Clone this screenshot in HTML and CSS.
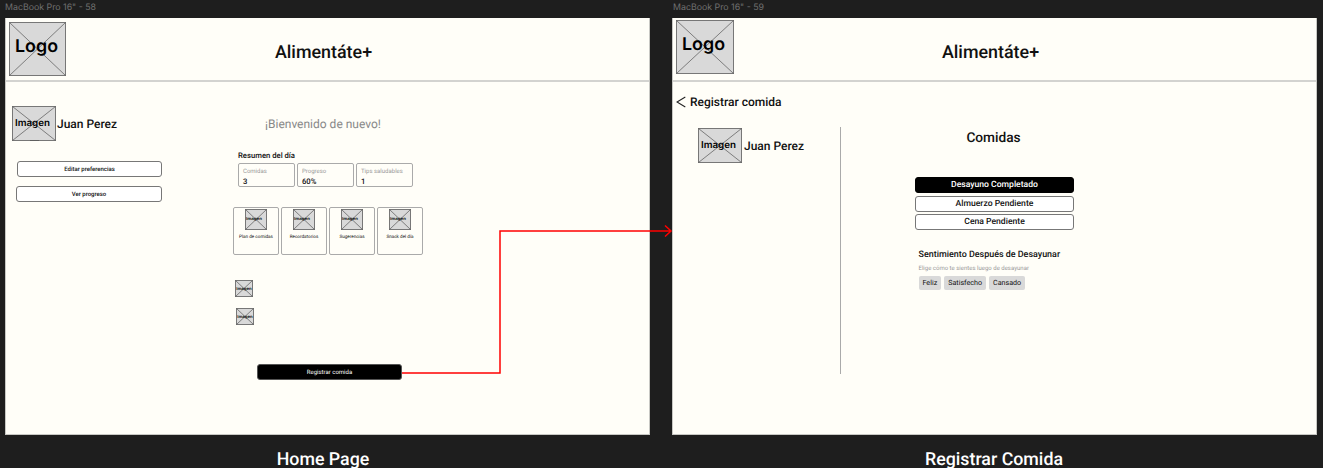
FILE: index.html
```html
<!DOCTYPE html>
<html lang="es">
<head>
<meta charset="utf-8">
<title>Alimentáte+ wireframes</title>
<link rel="stylesheet" href="styles.css">
</head>
<body>
<main class="canvas">
  <section class="artboard">
    <div class="frame-name">MacBook Pro 16" - 58</div>
    <div class="frame">
      <header class="header">
        <svg class="logo" viewBox="0 0 57 54"><rect x=".5" y=".5" width="56" height="53"/><path d="M.5.5l56 53M56.5.5l-56 53"/><text x="6" y="29.5" textLength="43" lengthAdjust="spacingAndGlyphs">Logo</text></svg>
        <h1>Alimentáte+</h1>
      </header>
      <div class="home">
        <aside class="sidebar">
          <div class="profile">
            <svg class="avatar" viewBox="0 0 44 35"><rect x=".5" y=".5" width="43" height="34"/><path d="M.5.5l43 34M43.5.5l-43 34M18 34.5h9"/><text x="3" y="20" textLength="35" lengthAdjust="spacingAndGlyphs">Imagen</text></svg>
            <span>Juan Perez</span>
          </div>
          <button class="side-button">Editar preferencias</button>
          <button class="side-button second">Ver progreso</button>
        </aside>
        <div class="content">
          <p class="welcome">¡Bienvenido de nuevo!</p>
          <h2 class="summary-title">Resumen del día</h2>
          <div class="stats">
            <div class="stat"><span>Comidas</span><b>3</b></div>
            <div class="stat"><span>Progreso</span><b>60%</b></div>
            <div class="stat"><span>Tips saludables</span><b>1</b></div>
          </div>
          <div class="cards">
            <div class="card"><svg viewBox="0 0 22 21"><rect x=".5" y=".5" width="21" height="20"/><path d="M.5.5l21 20M21.5.5l-21 20"/><text x="1" y="10.8" textLength="16" lengthAdjust="spacingAndGlyphs">Imagen</text></svg><span>Plan de comidas</span></div>
            <div class="card"><svg viewBox="0 0 22 21"><rect x=".5" y=".5" width="21" height="20"/><path d="M.5.5l21 20M21.5.5l-21 20"/><text x="1" y="10.8" textLength="16" lengthAdjust="spacingAndGlyphs">Imagen</text></svg><span>Recordatorios</span></div>
            <div class="card"><svg viewBox="0 0 22 21"><rect x=".5" y=".5" width="21" height="20"/><path d="M.5.5l21 20M21.5.5l-21 20"/><text x="1" y="10.8" textLength="16" lengthAdjust="spacingAndGlyphs">Imagen</text></svg><span>Sugerencias</span></div>
            <div class="card"><svg viewBox="0 0 22 21"><rect x=".5" y=".5" width="21" height="20"/><path d="M.5.5l21 20M21.5.5l-21 20"/><text x="1" y="10.8" textLength="16" lengthAdjust="spacingAndGlyphs">Imagen</text></svg><span>Snack del día</span></div>
          </div>
          <div class="thumbs">
            <svg viewBox="0 0 18 17"><rect x=".5" y=".5" width="17" height="16"/><path d="M.5.5l17 16M17.5.5l-17 16"/><text x="1.2" y="10" textLength="15.5" lengthAdjust="spacingAndGlyphs">Imagen</text></svg>
            <svg class="shifted" viewBox="0 0 18 17"><rect x=".5" y=".5" width="17" height="16"/><path d="M.5.5l17 16M17.5.5l-17 16"/><text x="1.2" y="10" textLength="15.5" lengthAdjust="spacingAndGlyphs">Imagen</text></svg>
          </div>
          <button class="register">Registrar comida</button>
        </div>
      </div>
    </div>
    <h3 class="caption">Home Page</h3>
  </section>

  <section class="artboard">
    <div class="frame-name second-name">MacBook Pro 16" - 59</div>
    <div class="frame">
      <header class="header meal-header">
        <svg class="logo" viewBox="0 0 58 54"><rect x=".5" y=".5" width="57" height="53"/><path d="M.5.5l57 53M57.5.5l-57 53"/><text x="6" y="29.5" textLength="43" lengthAdjust="spacingAndGlyphs">Logo</text></svg>
        <h1>Alimentáte+</h1>
      </header>
      <div class="back">
        <svg viewBox="0 0 10 12"><path d="M9.3 1L1 6l8.3 5"/></svg>
        <span>Registrar comida</span>
      </div>
      <div class="meal">
        <aside class="meal-side">
          <div class="profile">
            <svg class="avatar" viewBox="0 0 44 35"><rect x=".5" y=".5" width="43" height="34"/><path d="M.5.5l43 34M43.5.5l-43 34"/><text x="3" y="20" textLength="35" lengthAdjust="spacingAndGlyphs">Imagen</text></svg>
            <span>Juan Perez</span>
          </div>
        </aside>
        <div class="meal-content">
          <h2 class="meal-title">Comidas</h2>
          <div class="meal-list">
            <button class="meal-button done">Desayuno Completado</button>
            <button class="meal-button">Almuerzo Pendiente</button>
            <button class="meal-button">Cena Pendiente</button>
          </div>
          <h3 class="feeling-title">Sentimiento Después de Desayunar</h3>
          <p class="feeling-hint">Elige cómo te sientes luego de desayunar</p>
          <div class="chips"><span>Feliz</span><span>Satisfecho</span><span>Cansado</span></div>
        </div>
      </div>
    </div>
    <h3 class="caption meal-caption">Registrar Comida</h3>
  </section>

  <svg class="connector" viewBox="0 0 1323 468"><path d="M402 373H500V231H671M665 225.500L671 231L665 236.500"/></svg>
</main>
</body>
</html>
```
FILE: styles.css
```css
* { box-sizing: border-box; margin: 0; padding: 0; }
body { background: #1e1e1e; font-family: Roboto, sans-serif; color: #111; overflow: hidden; text-rendering: geometricPrecision; }
button { font: inherit; color: inherit; display: block; text-rendering: inherit; }
svg { display: block; flex: none; }
.canvas { position: relative; width: 1323px; height: 468px; padding-left: 5px; display: flex; gap: 22px; }
.connector { position: absolute; inset: 0; width: 1323px; height: 468px; fill: none; pointer-events: none; }
.artboard { width: 645px; flex: none; }
.frame-name { height: 18px; font: 8.8px/16px Inter, sans-serif; color: #707070; white-space: nowrap; }
.second-name { padding-left: 1px; }
.frame { height: 417px; background: #fffef8; border: solid #c8c8c4; border-width: 0 1px 1px; }
.caption { font-size: 17.8px; font-weight: 500; line-height: 22px; margin-top: 14px; padding-right: 9px; text-align: center; color: #fff; }
.meal-caption { padding-right: 1px; }

rect { fill: #d9d9d9; stroke: #777; stroke-width: 1; }
path { fill: none; stroke: #555; stroke-width: .7; }
.connector path { stroke: #f00; stroke-width: 1.5; }
text { font-family: Inter, sans-serif; font-weight: 600; fill: #000; }

.header { height: 64px; border-bottom: 2px solid #d3d3d0; padding: 4px 0 0 3px; display: flex; }
.meal-header { padding: 2px 0 0 3px; }
.logo { width: 57px; height: 54px; }
.meal-header .logo { width: 58px; }
.logo text { font-size: 17.5px; }
.header h1 { flex: 1; font-size: 17.9px; font-weight: 500; line-height: 22px; padding: 20px 68px 0 0; text-align: center; }
.header.meal-header h1 { padding: 22px 69px 0 0; }

.home { display: flex; }
.sidebar { width: 227px; padding: 24px 0 0 6px; }
.profile { display: flex; align-items: center; gap: 1px; height: 35px; font-size: 12px; font-weight: 500; }
.avatar { width: 44px; height: 35px; }
.avatar text { font-size: 9.5px; }
.side-button { width: 145px; height: 16px; margin: 20px 0 0 5px; padding-top: 1px; border: 1px solid #777; border-radius: 3px; background: #fff; font-size: 6px; font-weight: 500; line-height: 13px; }
.side-button.second { width: 146px; margin: 9px 0 0 4px; }

.content { width: 190px; padding-top: 35px; }
.welcome { font-size: 12px; line-height: 14px; text-align: center; color: #888; padding-right: 10px; white-space: nowrap; }
.summary-title { font-size: 7.7px; font-weight: 500; line-height: 10px; margin: 20px 0 0 5px; }
.stats { display: grid; grid-template-columns: repeat(3, 57px); gap: 2px; margin: 2px 0 0 5px; }
.stat { height: 24px; border: 1px solid #aaa; border-radius: 2px; padding: 4px 0 0 4px; }
.stat span, .stat b { display: block; }
.stat span { font-size: 6px; line-height: 8px; color: #999; white-space: nowrap; }
.stat b { font-size: 7.7px; font-weight: 500; line-height: 12px; }
.cards { display: grid; grid-template-columns: repeat(4, 46px); justify-content: space-between; margin-top: 20px; }
.card { height: 48px; border: 1px solid #aaa; border-radius: 2px; display: flex; flex-direction: column; align-items: center; padding-top: 1px; }
.card svg { width: 22px; height: 21px; }
.card text { font-size: 4px; }
.card span { font-size: 4.6px; line-height: 6px; margin-top: 5px; white-space: nowrap; }
.thumbs { display: flex; flex-direction: column; gap: 11px; margin: 25px 0 0 2px; }
.thumbs svg { width: 18px; height: 17px; }
.thumbs .shifted { margin-left: 1px; }
.thumbs text { font-size: 4px; }
.register { width: 145px; height: 16px; margin: 39px 0 0 24px; padding-top: 1px; border: 1px solid #555; border-radius: 3px; background: #000; color: #fff; font-size: 6px; line-height: 13px; }

.back { display: flex; align-items: center; gap: 4px; padding: 13px 0 0 3px; font-size: 12px; font-weight: 500; line-height: 14px; }
.back svg { width: 10px; height: 12px; }
.back path { stroke: #222; stroke-width: 1.1; }
.meal { display: flex; margin-top: 18px; }
.meal-side { width: 168px; height: 247px; border-right: 1px solid #aaa; padding: 1px 0 0 25px; }
.meal-side .profile { gap: 2px; }
.meal-content { padding-left: 74px; }
.meal-title { width: 160px; font-size: 13.7px; font-weight: 500; line-height: 18px; text-align: center; padding-right: 3px; margin-top: 2px; }
.meal-list { width: 159px; display: grid; gap: 2.5px; margin-top: 30px; }
.meal-button { height: 16px; padding-top: 1px; border: 1px solid #777; border-radius: 3px; background: #fff; font-size: 8.6px; font-weight: 500; line-height: 13px; }
.meal-button.done { background: #000; border-color: #000; color: #fff; }
.feeling-title { font-size: 8.95px; font-weight: 500; line-height: 12px; margin: 19px 0 0 3.5px; }
.feeling-hint { font-size: 6px; line-height: 8px; color: #999; margin: 4px 0 0 3.5px; }
.chips { display: flex; gap: 3px; margin: 3px 0 0 3.5px; }
.chips span { height: 14px; padding: 0 4px; border-radius: 2px; background: #d9d9d9; font-size: 7.15px; line-height: 14px; }
```
